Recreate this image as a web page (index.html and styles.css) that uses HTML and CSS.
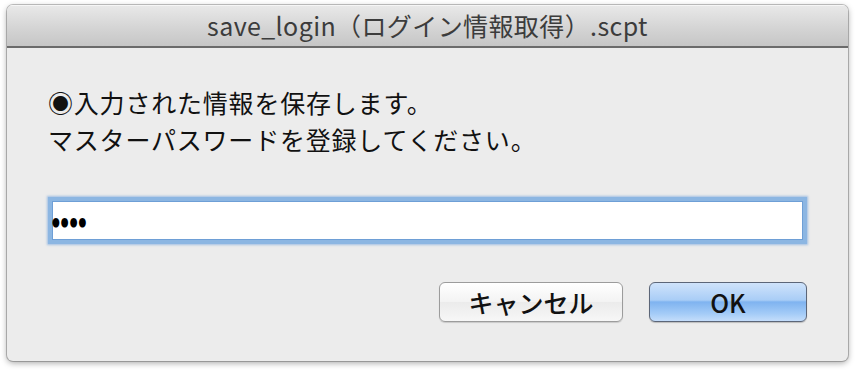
FILE: index.html
```html
<!DOCTYPE html>
<html lang="ja">
<head>
<meta charset="utf-8">
<title>save_login</title>
<link rel="stylesheet" href="styles.css">
</head>
<body>
<div class="window">
  <div class="titlebar">save_login（ログイン情報取得）.scpt</div>
  <div class="content">
    <p class="message">◉入力された情報を保存します。<br>マスターパスワードを登録してください。</p>
    <div class="field"><span class="dots">●●●●</span></div>
    <div class="buttons">
      <button class="btn cancel">キャンセル</button>
      <button class="btn ok">OK</button>
    </div>
  </div>
</div>
</body>
</html>
```
FILE: styles.css
```css
html, body {
  margin: 0;
  background: #ffffff;
}
body {
  width: 856px;
  height: 372px;
  box-sizing: border-box;
  padding: 5px 8px 11px 7px;
  font-family: "Noto Sans CJK JP", "Noto Sans", sans-serif;
  overflow: hidden;
}
.window {
  height: 356px;
  border-radius: 6px;
  background: #ececec;
  box-shadow: 0 0 0 1px rgba(0,0,0,0.22), 0 2px 6px rgba(0,0,0,0.35);
  display: flex;
  flex-direction: column;
  overflow: hidden;
}
.titlebar {
  height: 41px;
  border-bottom: 2px solid #6b6b6b;
  background: linear-gradient(#e9e9e9, #d3d3d3 60%, #c6c6c6);
  color: #3c3c3c;
  font-size: 25px;
  line-height: 41px;
  text-align: center;
  letter-spacing: 0.4px;
  box-shadow: inset 0 1px 0 #f6f6f6;
}
.content {
  flex: 1;
  padding: 36px 41px 0 41px;
  display: flex;
  flex-direction: column;
}
.message {
  margin: 0;
  font-size: 25px;
  line-height: 37px;
  color: #111;
  letter-spacing: 0.8px;
}
.field {
  margin-top: 39px;
  height: 39px;
  border: 4px solid #8cb6e2;
  background: #fff;
  box-shadow: 0 0 2px 1px rgba(110,160,220,0.6), inset 0 0 0 1px #6e9fd6;
  display: flex;
  align-items: center;
  padding-left: 0;
}
.dots {
  font-family: "DejaVu Sans", sans-serif;
  font-size: 9px;
  letter-spacing: 1px;
  color: #000;
  margin-top: 3px;
  transform: scaleY(1.4);
  transform-origin: left center;
}
.buttons {
  margin-top: 38px;
  display: flex;
  justify-content: flex-end;
  gap: 26px;
}
.btn {
  height: 40px;
  border-radius: 6px;
  font-family: "Noto Sans CJK JP", "Noto Sans", sans-serif;
  font-size: 25px;
  font-weight: 500;
  color: #111;
  padding: 0;
  line-height: 36px;
}
.cancel {
  width: 184px;
  border: 1px solid #9c9c9c;
  background: linear-gradient(#ffffff, #f3f3f3 50%, #ebebeb 51%, #f7f7f7);
  box-shadow: 0 1px 1px rgba(0,0,0,0.15);
}
.ok {
  width: 158px;
  border: 1px solid #5c6678;
  background: linear-gradient(#cfe3fb, #a9cdf6 45%, #7fb3f0 50%, #a3cbf7 80%, #c4ddfb);
  box-shadow: 0 1px 1px rgba(0,0,0,0.2);
}
```
